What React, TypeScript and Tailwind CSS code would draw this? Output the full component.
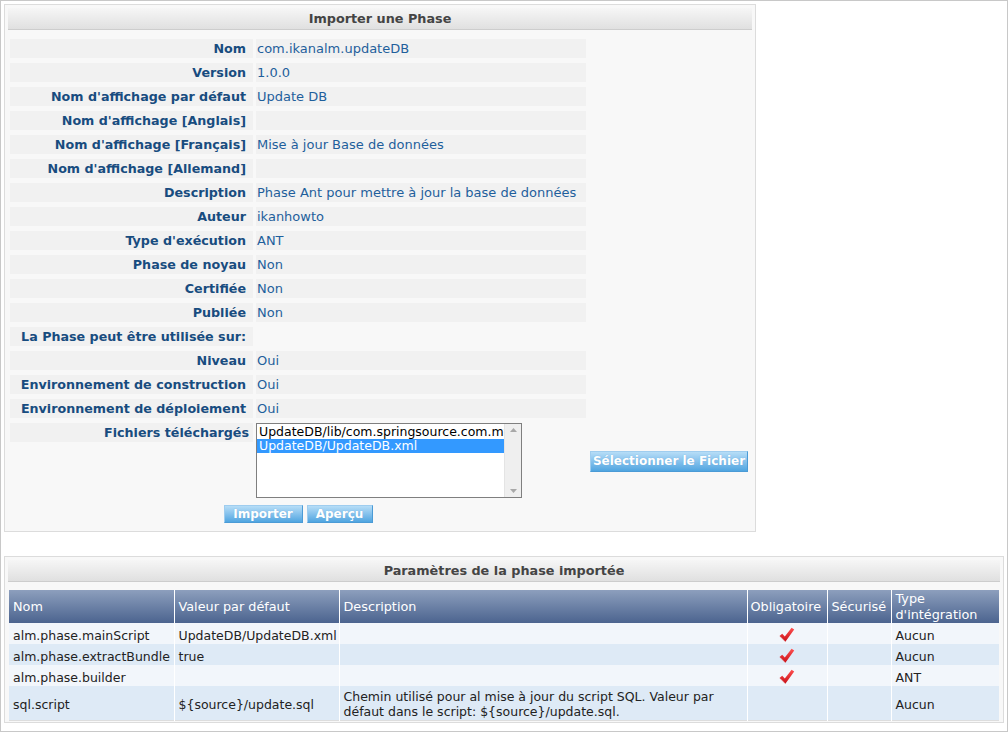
import React from "react";

const rows: [string, string | null][] = [
  ["Nom", "com.ikanalm.updateDB"],
  ["Version", "1.0.0"],
  ["Nom d'affichage par défaut", "Update DB"],
  ["Nom d'affichage [Anglais]", ""],
  ["Nom d'affichage [Français]", "Mise à jour Base de données"],
  ["Nom d'affichage [Allemand]", ""],
  ["Description", "Phase Ant pour mettre à jour la base de données"],
  ["Auteur", "ikanhowto"],
  ["Type d'exécution", "ANT"],
  ["Phase de noyau", "Non"],
  ["Certifiée", "Non"],
  ["Publiée", "Non"],
  ["La Phase peut être utilisée sur:", null],
  ["Niveau", "Oui"],
  ["Environnement de construction", "Oui"],
  ["Environnement de déploiement", "Oui"],
];

const params = [
  { nom: "alm.phase.mainScript", val: "UpdateDB/UpdateDB.xml", desc: "", oblig: true, type: "Aucun" },
  { nom: "alm.phase.extractBundle", val: "true", desc: "", oblig: true, type: "Aucun" },
  { nom: "alm.phase.builder", val: "", desc: "", oblig: true, type: "ANT" },
  {
    nom: "sql.script",
    val: "${source}/update.sql",
    desc: "multi",
    oblig: false,
    type: "Aucun",
  },
];

function BlueButton({ children, className }: { children: React.ReactNode; className?: string }) {
  return (
    <button
      className={
        "bg-linear-to-b from-[#b6ddf7] to-[#4fa5e0] border border-[#4b9bd6] border-t-[#9fcdef] border-l-[#9fcdef] text-white font-bold text-[12px] leading-none [text-shadow:0_0_1px_#6aa9d8] " +
        (className ?? "")
      }
    >
      {children}
    </button>
  );
}

function Check() {
  return (
    <svg width="16" height="16" viewBox="0 0 16 16" className="inline-block">
      <defs>
        <linearGradient id="chk" x1="0" y1="0" x2="0" y2="1">
          <stop offset="0" stopColor="#ff5050" />
          <stop offset="1" stopColor="#c81018" />
        </linearGradient>
      </defs>
      <path d="M0.5 9 L3.2 6.8 L5.8 9.6 L12.6 0.8 L15.2 2.6 L6.4 14.8 Z" fill="url(#chk)" />
      <path d="M1.5 9.6 L6.2 14.6" stroke="#e89a9a" strokeWidth="0.8" opacity="0.6" />
    </svg>
  );
}

function PanelHeader({ title }: { title: string }) {
  return (
    <div className="h-[22px] bg-linear-to-b from-[#f6f6f6] to-[#e0e0e0] border-b border-[#cdcdcd] text-center font-bold text-[#444] text-[12.8px] leading-[21px]">
      {title}
    </div>
  );
}

export default function App() {
  return (
    <div className="w-[1008px] h-[732px] border border-[#c8c8c8] p-[3px] bg-white font-['DejaVu_Sans',Verdana,sans-serif] text-[12px]">
      {/* Importer une Phase */}
      <div className="w-[752px] border border-[#dcdcdc] bg-[#f8f8f8] p-[3px]">
        <PanelHeader title="Importer une Phase" />
        <div className="ml-[2px] mt-[9px] grid grid-cols-[243px_330px_158px] gap-x-[3px] gap-y-[5px]">
          {rows.map(([label, value]) => (
            <React.Fragment key={label}>
              <div className="h-[19px] bg-[#f1f1f1] text-right pr-[7px] font-bold text-[12.7px] text-[#184c7f] leading-[20px] whitespace-nowrap">
                {label}
              </div>
              <div
                className={
                  "h-[19px] pl-[1px] text-[13px] text-[#1f5f9c] leading-[20px] whitespace-nowrap " +
                  (value === null ? "" : "bg-[#f1f1f1]")
                }
              >
                {value}
              </div>
              <div />
            </React.Fragment>
          ))}
          <div className="h-[19px] self-start bg-[#f1f1f1] text-right pr-[4px] font-bold text-[12.7px] text-[#184c7f] leading-[20px] whitespace-nowrap">
            Fichiers téléchargés
          </div>
          <div>
            <div className="w-[266px] h-[75px] border border-[#7f7f7f] bg-white flex text-[12.5px]">
              <div className="w-[247px] pt-[1px] overflow-hidden">
                <div className="h-[14px] leading-[14px] pl-[2px] text-black whitespace-nowrap overflow-hidden">
                  UpdateDB/lib/com.springsource.com.my
                </div>
                <div className="h-[14px] leading-[14px] pl-[2px] bg-[#3399ff] text-white whitespace-nowrap">
                  UpdateDB/UpdateDB.xml
                </div>
              </div>
              <div className="w-[17px] bg-[#efefef] border-l border-[#e4e4e4] flex flex-col justify-between items-center py-[4px]">
                <svg width="7" height="4" viewBox="0 0 7 4">
                  <path d="M0 4 L3.5 0 L7 4 Z" fill="#a8a8a8" />
                </svg>
                <svg width="7" height="4" viewBox="0 0 7 4">
                  <path d="M0 0 L3.5 4 L7 0 Z" fill="#a8a8a8" />
                </svg>
              </div>
            </div>
          </div>
          <div className="self-center ml-[1px] mt-[1px]">
            <BlueButton className="w-[158px] h-[21px]">Sélectionner le Fichier</BlueButton>
          </div>
        </div>
        <div className="ml-[2px] w-[576px] mt-[7px] mb-[5px] flex justify-center gap-[4px]">
          <BlueButton className="w-[79px] h-[18px]">Importer</BlueButton>
          <BlueButton className="w-[66px] h-[18px]">Aperçu</BlueButton>
        </div>
      </div>

      {/* Paramètres de la phase importée */}
      <div className="mt-[24px] border border-[#dcdcdc] bg-[#f8f8f8] p-[3px] pb-[1px]">
        <PanelHeader title="Paramètres de la phase importée" />
        <table className="mt-[8px] ml-[1px] w-[990px] table-fixed border-collapse text-[12.5px] border-b border-[#dddddd]">
          <colgroup>
            <col className="w-[165px]" />
            <col className="w-[165px]" />
            <col className="w-[408px]" />
            <col className="w-[80px]" />
            <col className="w-[64px]" />
            <col className="w-[108px]" />
          </colgroup>
          <thead>
            <tr className="h-[33px] bg-linear-to-b from-[#8d9fbd] to-[#4c648f] text-white text-[12.8px]">
              <th className="font-normal text-left px-[4px] border-r border-white">Nom</th>
              <th className="font-normal text-left px-[4px] border-r border-white">Valeur par défaut</th>
              <th className="font-normal text-left px-[4px] border-r border-white">Description</th>
              <th className="font-normal text-left px-[3px] border-r border-white whitespace-nowrap">Obligatoire</th>
              <th className="font-normal text-left px-[4px] border-r border-white whitespace-nowrap">Sécurisé</th>
              <th className="font-normal text-left px-[4px] leading-[16px]">
                Type
                <br />
                d'intégration
              </th>
            </tr>
          </thead>
          <tbody className="text-[#222] leading-[15px]">
            {params.map((p, i) => (
              <tr
                key={p.nom}
                className={(i % 2 === 0 ? "bg-[#f2f6fb]" : "bg-[#deeaf6]") + (p.desc ? " h-[34px]" : " h-[21px]")}
              >
                <td className="px-[4px] pt-[3px] border-r border-white whitespace-nowrap">{p.nom}</td>
                <td className="px-[4px] pt-[3px] border-r border-white whitespace-nowrap">{p.val}</td>
                <td className="px-[4px] pt-[3px] border-r border-white">
                  {p.desc && (
                    <>
                      Chemin utilisé pour al mise à jour du script SQL. Valeur par
                      <br />
                      défaut dans le script: ${"{source}"}/update.sql.
                    </>
                  )}
                </td>
                <td className="px-[4px] pt-[2px] border-r border-white text-center leading-none">{p.oblig && <Check />}</td>
                <td className="px-[4px] border-r border-white"></td>
                <td className="px-[4px] pt-[3px]">{p.type}</td>
              </tr>
            ))}
          </tbody>
        </table>
      </div>
    </div>
  );
}
